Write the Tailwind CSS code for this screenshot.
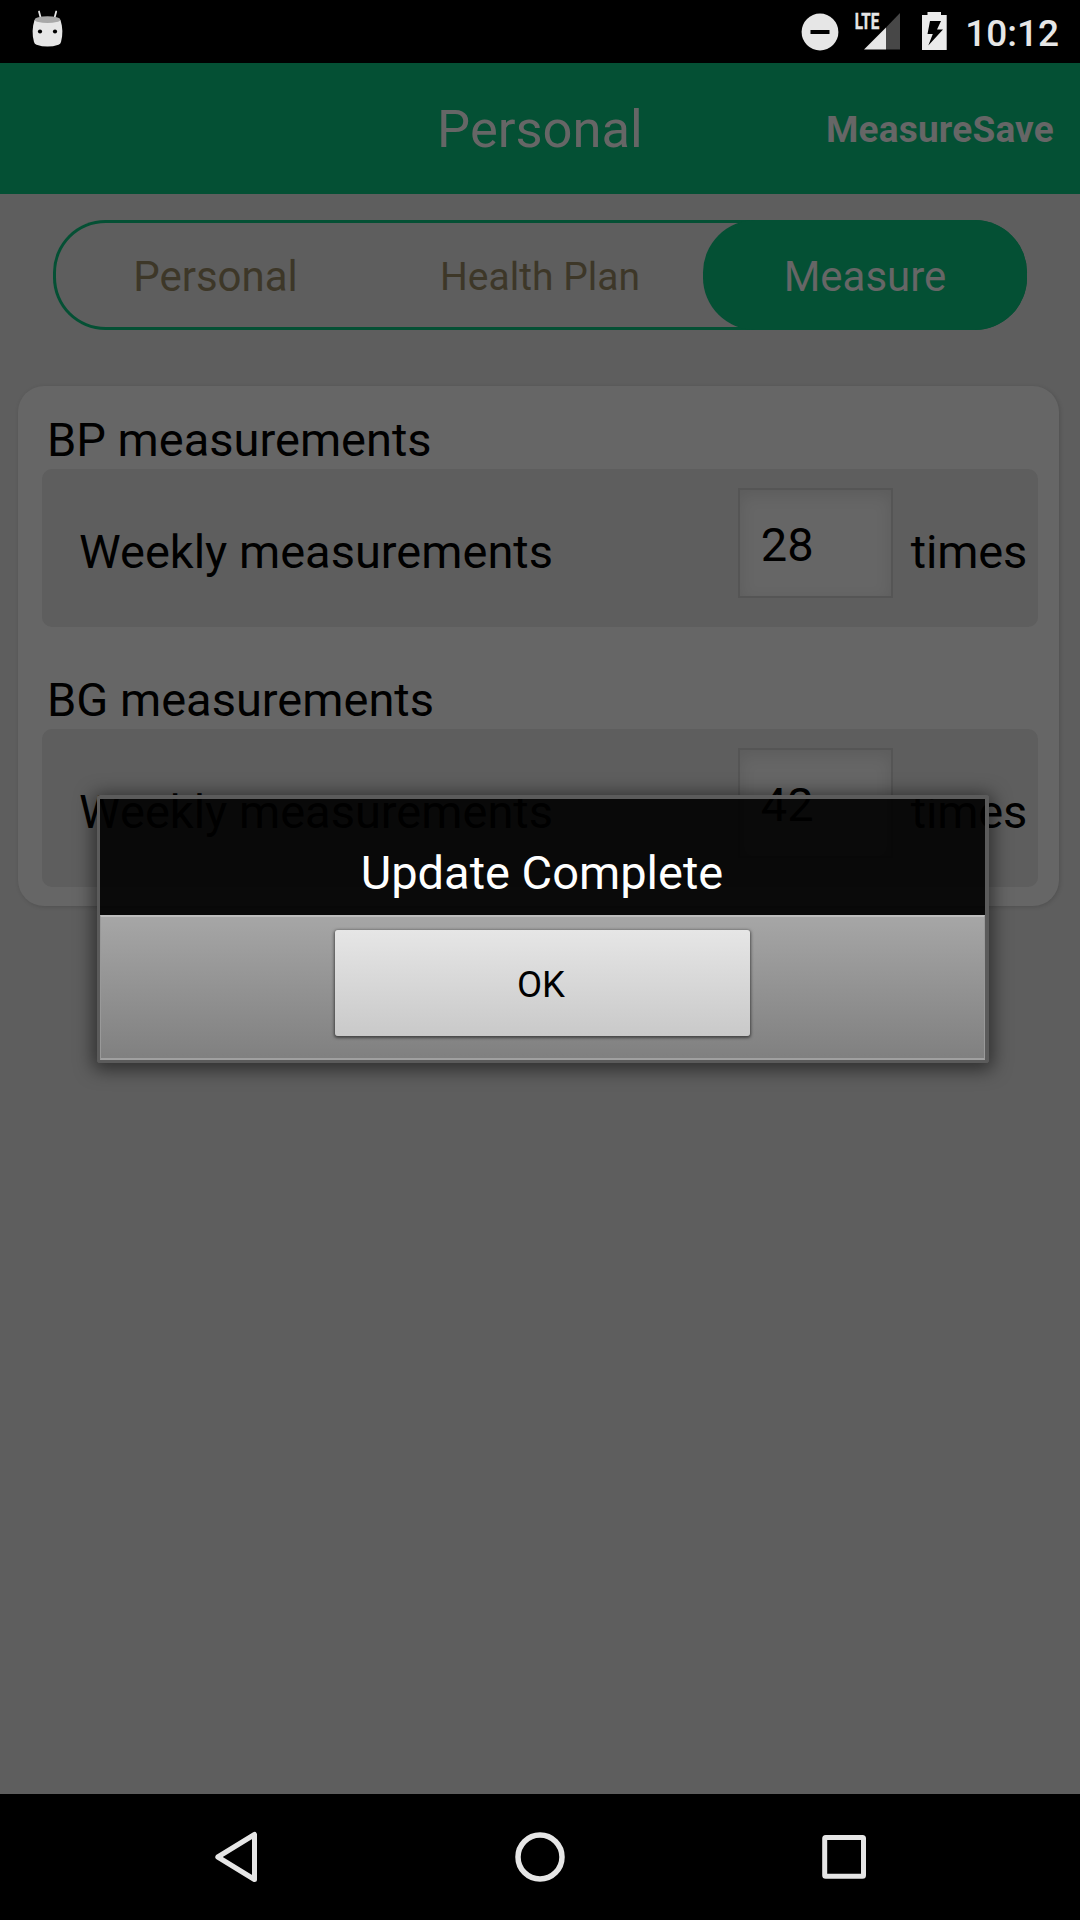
<!DOCTYPE html>
<html lang="en">
<head>
<meta charset="utf-8">
<title>Personal</title>
<script src="https://cdn.jsdelivr.net/npm/@tailwindcss/browser@4"></script>
</head>
<body class="relative flex h-[1920px] w-[1080px] flex-col overflow-hidden bg-[#5e5e5e] font-['Roboto',sans-serif] text-[47px] leading-[56px] text-black">

  <!-- Status bar -->
  <div class="flex h-[63px] shrink-0 items-start justify-between bg-black">
    <svg class="ml-8 h-[63px] w-8" viewBox="32 0 32 63">
      <path d="M39 11.5 41 19M56.200 11.500 54.200 19" stroke="#e6e6e6" stroke-width="1.800" stroke-linecap="round"/>
      <path d="M34.500 20C32.200 27 32 35 34 42Q34.500 44 36.500 44.700Q47.500 48.500 58.500 44.700Q60.500 44 61 42C63 35 62.800 27 60.500 20Z" fill="#e6e6e6"/>
      <ellipse cx="47.500" cy="19.700" rx="12.800" ry="3.400" fill="#a8a8a8"/>
      <circle cx="40" cy="31.500" r="2.100" fill="#000"/><circle cx="55" cy="31.500" r="2.100" fill="#000"/>
    </svg>
    <div class="flex h-[63px] items-start pr-[21px]">
      <svg class="h-[63px] w-[165px]" viewBox="800 0 165 63">
        <circle cx="820" cy="32" r="18.400" fill="#e6e6e6"/>
        <rect x="810.500" y="30" width="19" height="4" fill="#000"/>
        <text x="854.700" y="29" textLength="24.500" lengthAdjust="spacingAndGlyphs" font-family="Roboto" font-weight="700" font-size="22" fill="#e6e6e6" stroke="#e6e6e6" stroke-width="0.400">LTE</text>
        <path d="M864 49.500 886 27.500V49.500Z" fill="#e6e6e6"/>
        <path d="M886 27.500 900 13V49.500H886Z" fill="#474747"/>
        <path d="M922 15H927.500V12H941V15H946.700V50H922Z" fill="#ebebeb"/>
        <path d="M930 21H941L937 29.500H943L928.300 45.500L932.800 34H927.500Z" fill="#000"/>
      </svg>
      <span class="pt-[6px] text-[37px] font-medium text-[#e6e6e6]">10:12</span>
    </div>
  </div>

  <!-- App bar -->
  <header class="grid h-[131px] shrink-0 grid-cols-3 items-center bg-[#045034] text-[#666666]">
    <h1 class="col-start-2 text-center text-[52.5px]">Personal</h1>
    <span class="pt-[2px] pr-[26px] text-right text-[37px] font-bold tracking-[0.2px]">MeasureSave</span>
  </header>

  <!-- Tabs -->
  <nav class="mx-[53px] mt-[26px] flex h-[110px] shrink-0 rounded-[52.5px] text-center text-[42px] text-[#3d3728] shadow-[inset_0_0_0_3px_#045034]">
    <span class="w-[325px] pt-[29px]">Personal</span>
    <span class="w-[325px] pt-[29px] pr-[1px] text-[39px]">Health Plan</span>
    <span class="flex-1 rounded-[52.5px] bg-[#045034] pt-[29px] text-[#666666]">Measure</span>
  </nav>

  <!-- Measurement targets -->
  <main class="mt-[56px] mr-[21px] ml-[18px] h-[520px] shrink-0 rounded-[26px] bg-[#666666] pt-[26px] pr-[21px] pl-[24px] shadow-[1px_1px_4px_rgba(0,0,0,0.15)]">
    <h2 class="h-[57px] pl-[5px]">BP measurements</h2>
    <section class="flex h-[158px] items-start rounded-[10px] bg-[#5e5e5e] pr-[11px] pl-[37px]">
      <span class="flex-1 pt-[55px]">Weekly measurements</span>
      <span class="mt-[19px] h-[110px] w-[155px] border-2 border-[#555555] bg-[#666666] pt-[27px] pl-[21px] shadow-[inset_0_5px_16px_rgba(0,0,0,0.1)]">28</span>
      <span class="pt-[55px] pl-[18px] tracking-[-0.2px]">times</span>
    </section>
    <h2 class="mt-[45px] h-[57px] pl-[5px]">BG measurements</h2>
    <section class="flex h-[158px] items-start rounded-[10px] bg-[#5e5e5e] pr-[11px] pl-[37px]">
      <span class="flex-1 pt-[55px]">Weekly measurements</span>
      <span class="mt-[19px] h-[110px] w-[155px] border-2 border-[#555555] bg-[#666666] pt-[27px] pl-[21px] shadow-[inset_0_5px_16px_rgba(0,0,0,0.1)]">42</span>
      <span class="pt-[55px] pl-[18px] tracking-[-0.2px]">times</span>
    </section>
  </main>

  <!-- Navigation bar -->
  <footer class="mt-auto h-[126px] shrink-0 bg-black">
    <svg class="h-[126px] w-full" viewBox="0 1794 1080 126" fill="none" stroke="#e6e6e6" stroke-width="5" stroke-linejoin="round">
      <path d="M217.800 1857 254.500 1834.500V1879.500Z"/>
      <circle cx="540" cy="1857" r="22" stroke-width="5.500"/>
      <rect x="824.700" y="1837.500" width="38.800" height="38.800" rx="1"/>
    </svg>
  </footer>

  <!-- Dialog -->
  <div class="absolute top-[795px] left-[97px] flex h-[268px] w-[892px] flex-col rounded-[3px] border-t-4 border-r-4 border-b-[3px] border-l-[3px] border-[#5b5b5b] shadow-[0_3px_18px_4px_rgba(0,0,0,0.5)]">
    <div class="h-[116px] bg-black/90 pt-[46px] pr-[1px] text-center text-white">Update Complete</div>
    <div class="flex flex-1 justify-center border-x border-t-2 border-b-2 border-x-[#999999] border-t-[#bdbdbd] border-b-[#a0a0a0] bg-linear-to-b from-[#a6a6a6] to-[#808080] pt-[13px] pr-[1px]">
      <button class="h-[106px] w-[415px] rounded-[3px] bg-linear-to-b from-[#e6e6e6] to-[#c9c9c9] pt-[3px] pr-[2px] text-[36.5px] shadow-[0_1px_3px_1px_rgba(0,0,0,0.5)]">OK</button>
    </div>
  </div>
</body>
</html>
